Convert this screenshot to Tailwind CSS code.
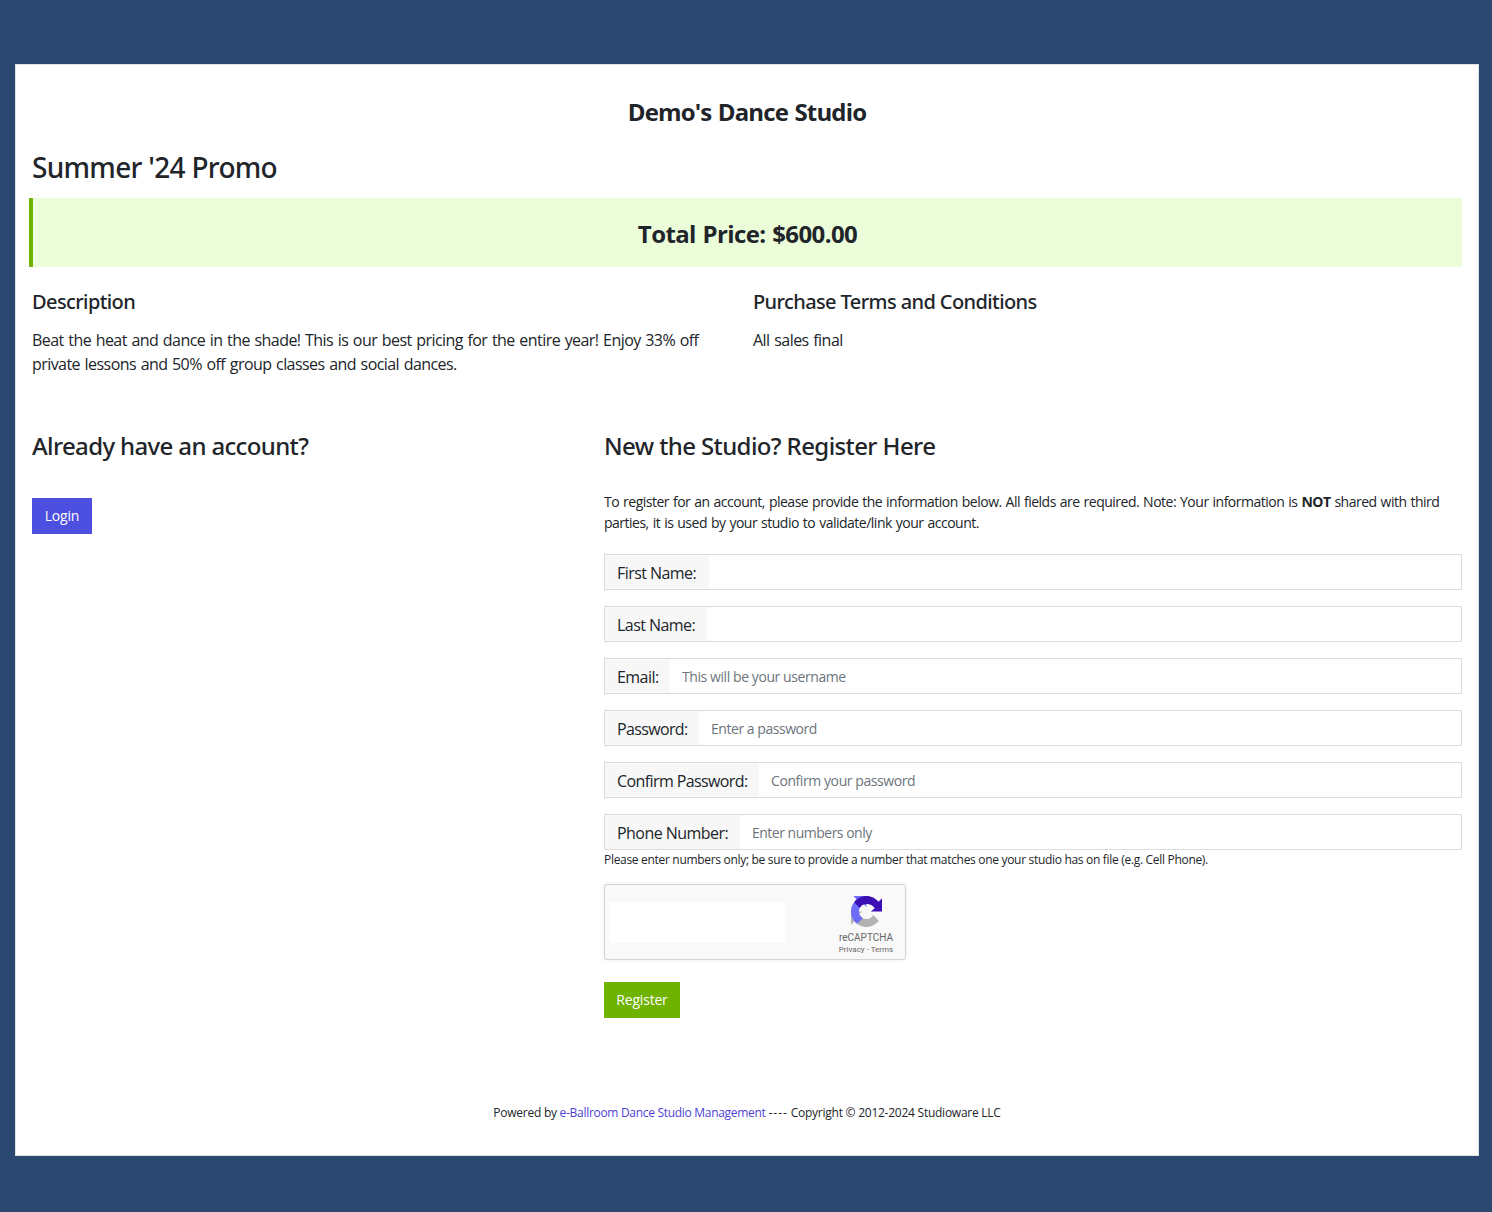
<!DOCTYPE html>
<html lang="en">
<head>
    <meta charset="UTF-8">
    <title>Demo's Dance Studio</title>
    <script src="https://cdn.jsdelivr.net/npm/@tailwindcss/browser@4"></script>
</head>
<body class="bg-[#2b4871] font-['Open_Sans',sans-serif] text-[#212529]">
    <div class="h-[1212px] pt-[64px] pl-[15px] pr-[13px]">
        <div class="h-[1092px] bg-white border border-[#dee2e6] px-[16px] pt-[23px]">
            <h1 class="text-center text-[24px] leading-[48px] font-bold tracking-[-0.85px] [word-spacing:1px]">Demo's Dance Studio</h1>
            <h2 class="text-[28px] leading-[34px] mt-[14px] font-['Noto_Sans',sans-serif] font-medium tracking-[-0.7px]">Summer '24 Promo</h2>
            <div class="mt-[14px] -ml-[3px] h-[69px] bg-[#ebfdd9] border-l-4 border-[#6fb200] flex items-center justify-center">
                <span class="pt-[3px] text-[24px] font-bold tracking-[-0.6px] [word-spacing:1px]">Total Price: $600.00</span>
            </div>

            <div class="flex mt-[22px]">
                <div class="w-[721px]">
                    <h3 class="text-[20px] leading-[26px] font-['Noto_Sans',sans-serif] font-medium tracking-[-0.6px]">Description</h3>
                    <p class="mt-[13px] text-[16px] leading-[24px] tracking-[-0.56px] [word-spacing:1px] w-[690px]">Beat the heat and dance in the shade! This is our best pricing for the entire year! Enjoy 33% off private lessons and 50% off group classes and social dances.</p>
                </div>
                <div>
                    <h3 class="text-[20px] leading-[26px] font-['Noto_Sans',sans-serif] font-medium tracking-[-0.6px]">Purchase Terms and Conditions</h3>
                    <p class="mt-[13px] text-[16px] leading-[24px] tracking-[-0.54px] [word-spacing:1px]">All sales final</p>
                </div>
            </div>

            <div class="flex mt-[53px]">
                <div class="w-[572px]">
                    <h3 class="text-[24px] leading-[34px] font-['Noto_Sans',sans-serif] font-medium tracking-[-0.64px]">Already have an account?</h3>
                    <button class="mt-[35px] pb-[2px] h-[36px] w-[60px] bg-[#4c4fdf] text-white text-[14px] tracking-[-0.2px]">Login</button>
                </div>
                <div class="flex-1">
                    <h3 class="text-[24px] leading-[34px] font-['Noto_Sans',sans-serif] font-medium tracking-[-0.6px]">New the Studio? Register Here</h3>
                    <p class="mt-[28px] text-[14px] leading-[21px] tracking-[-0.5px] [word-spacing:0.8px]">To register for an account, please provide the information below. All fields are required. Note: Your information is <b>NOT</b> shared with third parties, it is used by your studio to validate/link your account.</p>

                    <div class="mt-[21px] flex flex-col gap-[16px]">
                        <div class="flex h-[36px] border border-[#dcdcdc]">
                            <label class="flex items-center px-[12px] pt-[2px] bg-[#f7f7f7] text-[16px] tracking-[-0.55px] w-[104px] whitespace-nowrap">First Name:</label>
                            <input class="flex-1 px-[12px] text-[14px] outline-none">
                        </div>
                        <div class="flex h-[36px] border border-[#dcdcdc]">
                            <label class="flex items-center px-[12px] pt-[2px] bg-[#f7f7f7] text-[16px] tracking-[-0.55px] w-[102px] whitespace-nowrap">Last Name:</label>
                            <input class="flex-1 px-[12px] text-[14px] outline-none">
                        </div>
                        <div class="flex h-[36px] border border-[#dcdcdc]">
                            <label class="flex items-center px-[12px] pt-[2px] bg-[#f7f7f7] text-[16px] tracking-[-0.55px] w-[65px]">Email:</label>
                            <input class="flex-1 px-[12px] text-[14px] tracking-[-0.42px] outline-none placeholder:text-[#6c757d]" placeholder="This will be your username">
                        </div>
                        <div class="flex h-[36px] border border-[#dcdcdc]">
                            <label class="flex items-center px-[12px] pt-[2px] bg-[#f7f7f7] text-[16px] tracking-[-0.65px] w-[94px]">Password:</label>
                            <input class="flex-1 px-[12px] text-[14px] tracking-[-0.46px] outline-none placeholder:text-[#6c757d]" placeholder="Enter a password">
                        </div>
                        <div class="flex h-[36px] border border-[#dcdcdc]">
                            <label class="flex items-center px-[12px] pt-[2px] bg-[#f7f7f7] text-[16px] tracking-[-0.6px] w-[154px] whitespace-nowrap">Confirm Password:</label>
                            <input class="flex-1 px-[12px] text-[14px] tracking-[-0.42px] outline-none placeholder:text-[#6c757d]" placeholder="Confirm your password">
                        </div>
                        <div class="flex h-[36px] border border-[#dcdcdc]">
                            <label class="flex items-center px-[12px] pt-[2px] bg-[#f7f7f7] text-[16px] tracking-[-0.55px] w-[135px] whitespace-nowrap">Phone Number:</label>
                            <input class="flex-1 px-[12px] text-[14px] tracking-[-0.5px] outline-none placeholder:text-[#6c757d]" placeholder="Enter numbers only">
                        </div>
                    </div>
                    <p class="text-[12px] leading-[20px] tracking-[-0.31px]">Please enter numbers only; be sure to provide a number that matches one your studio has on file (e.g. Cell Phone).</p>

                    <div class="mt-[14px] w-[302px] h-[76px] bg-[#f9f9f9] border border-[#d3d3d3] rounded-[3px] shadow-[0_0_4px_rgba(0,0,0,0.08)] flex justify-between">
                        <div class="mt-[17px] ml-[5px] w-[175px] h-[41px] bg-white"></div>
                        <div class="w-[78px] flex flex-col items-center font-['Roboto',sans-serif]">
                            <svg class="mt-[11px] w-[31px] h-[31px]" viewBox="0 0 64 64">
                                <path transform="rotate(180 32 32)" d="M64 32V4.700l-7.200 7.200C50.900 4.700 42 0 32 0 21.600 0 12.400 5 6.600 12.700l11.700 11.900c1.200-2.100 2.800-4 4.800-5.300 2-1.600 5-2.900 9.900-2.900 .6 0 1.100.1 1.400.2 6.200.5 11.600 3.900 14.700 8.800L40.800 32z" fill="#b2b2b2"/>
                                <path transform="rotate(-90 32 32)" d="M64 32V4.700l-7.200 7.200C50.900 4.700 42 0 32 0 21.600 0 12.400 5 6.600 12.700l11.700 11.900c1.200-2.100 2.800-4 4.800-5.300 2-1.600 5-2.900 9.900-2.900 .6 0 1.100.1 1.400.2 6.200.5 11.600 3.900 14.700 8.800L40.800 32z" fill="#6c6cf8"/>
                                <path d="M64 32V4.700l-7.200 7.200C50.900 4.700 42 0 32 0 21.600 0 12.400 5 6.600 12.700l11.700 11.900c1.200-2.100 2.800-4 4.800-5.300 2-1.600 5-2.900 9.900-2.900 .6 0 1.100.1 1.400.2 6.200.5 11.600 3.900 14.700 8.800L40.800 32z" fill="#3c0fb4"/>
                            </svg>
                            <span class="mt-[5px] text-[10px] leading-[12px] text-[#666]">reCAPTCHA</span>
                            <span class="text-[8px] leading-[12px] text-[#666]">Privacy - Terms</span>
                        </div>
                    </div>

                    <button class="mt-[22px] pb-[2px] h-[36px] w-[76px] bg-[#6fb200] text-white text-[14px] tracking-[-0.2px]">Register</button>
                </div>
            </div>

            <p class="mt-[86px] text-center text-[12px] leading-[18px] tracking-[-0.25px]">Powered by <a class="text-[#4c3fd6] tracking-[-0.3px]">e-Ballroom Dance Studio Management</a> <span class="tracking-[1px]">----</span> Copyright © 2012-2024 Studioware LLC</p>
        </div>
    </div>
</body>
</html>
